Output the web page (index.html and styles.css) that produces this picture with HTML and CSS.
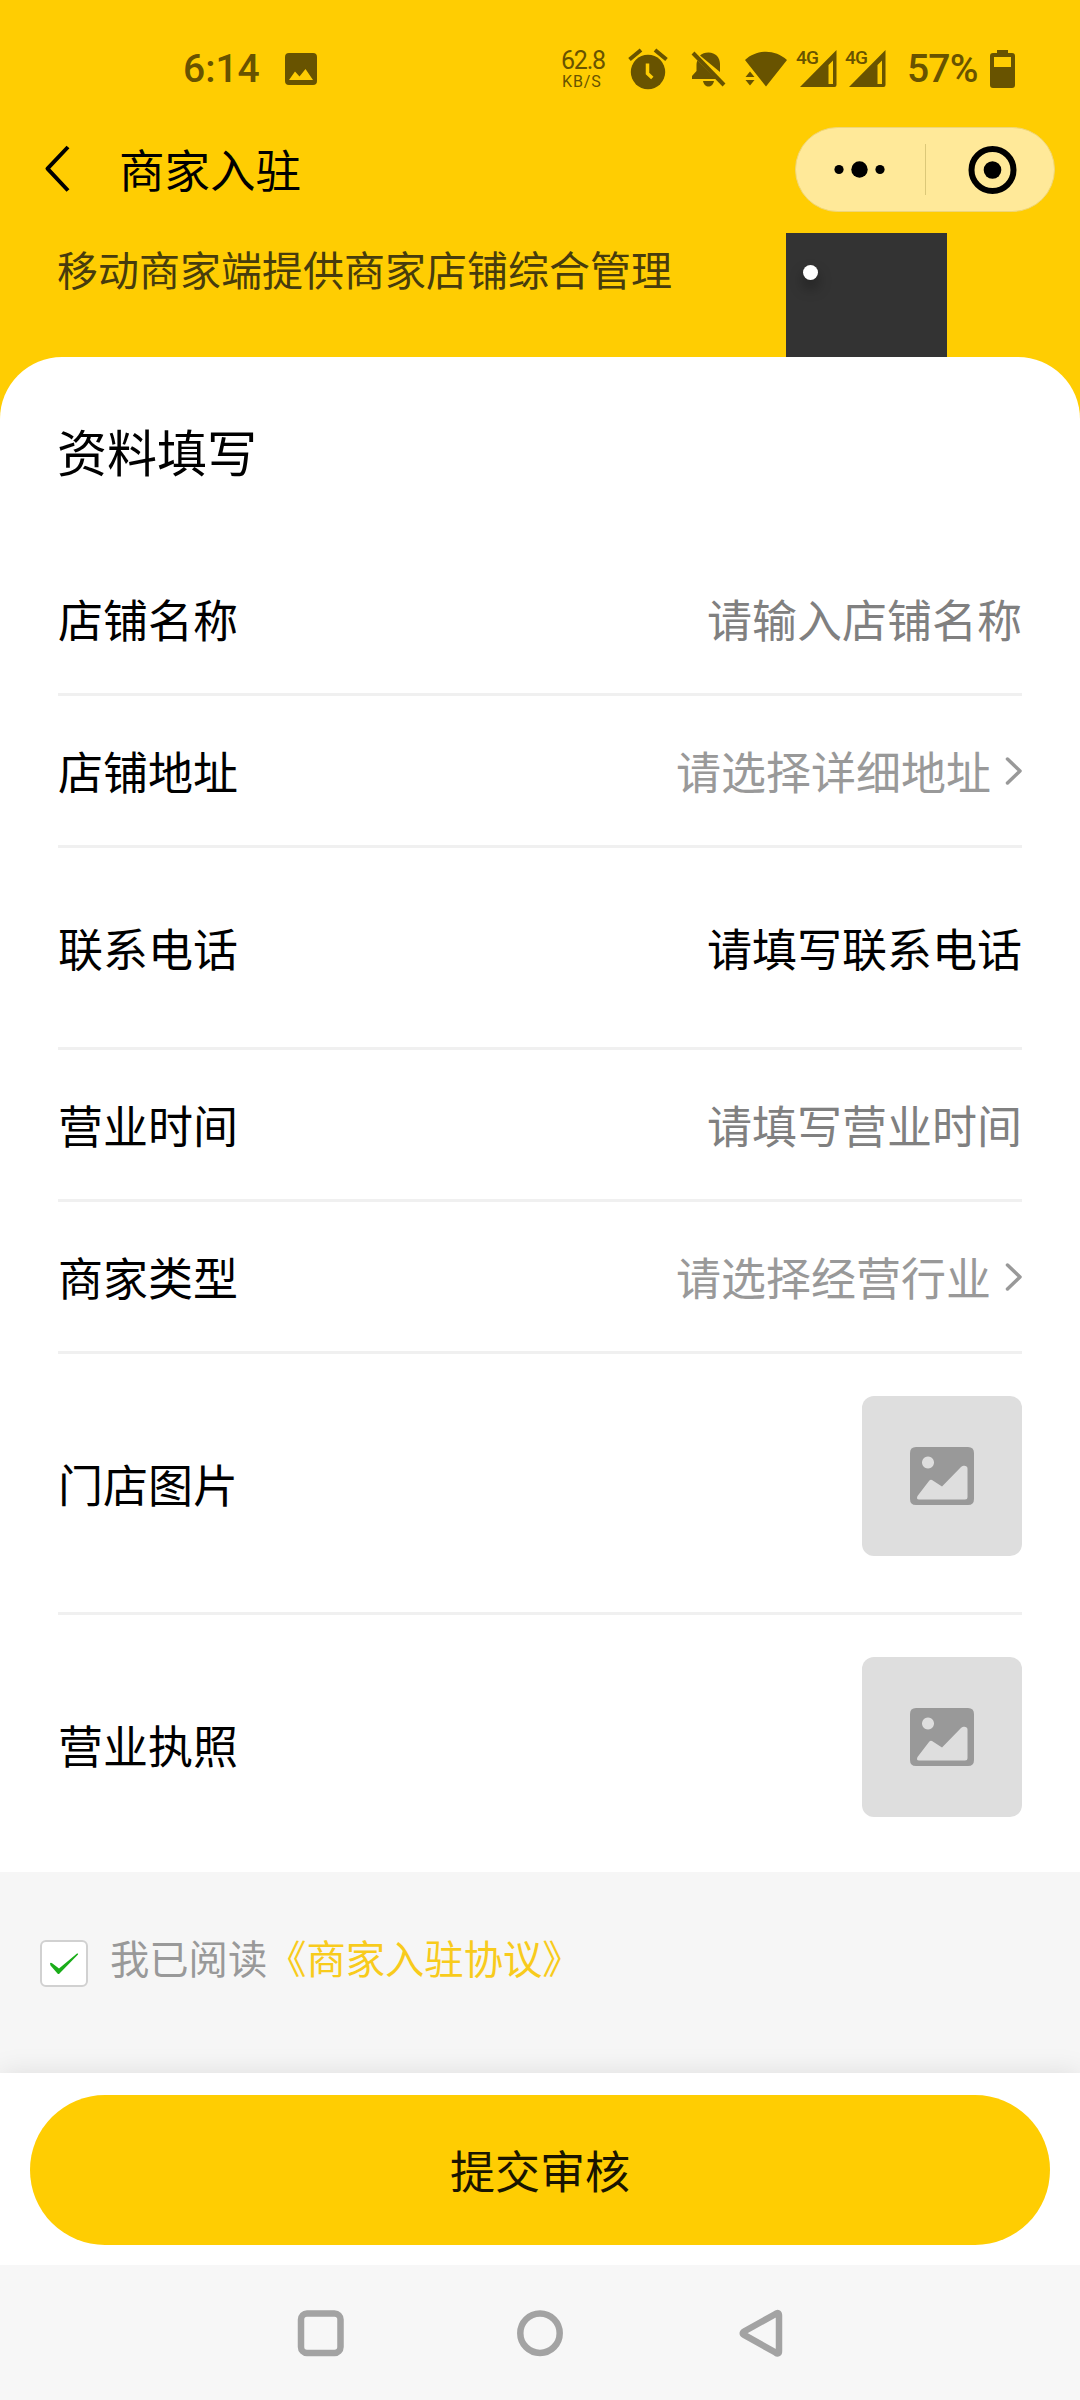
FILE: index.html
```html
<!DOCTYPE html>
<html lang="zh-CN">
<head>
<meta charset="utf-8">
<title>商家入驻</title>
<link rel="stylesheet" href="styles.css">
</head>
<body>
<div class="screen">
  <header class="hero">
    <div class="status">
      <span class="clock">6:14</span>
      <svg class="ic-photo" width="32" height="32" viewBox="0 0 32 32"><path fill-rule="evenodd" d="M4 0h24a4 4 0 0 1 4 4v24a4 4 0 0 1-4 4H4a4 4 0 0 1-4-4V4a4 4 0 0 1 4-4zM4 27h24L20.500 16l-6 7.500-4.500-5z"/></svg>
      <div class="speed"><span class="rate">62.8</span><span class="unit">KB/S</span></div>
      <svg class="ic-alarm" width="40" height="42" viewBox="0 0 40 42"><circle cx="20" cy="24" r="17.200"/><path class="line" d="M1.500 11.500L13 2M38.500 11.500L27 2"/><path class="cut" d="M19.500 15.500v10l4.800 4.500"/></svg>
      <svg class="ic-bell" width="36" height="36" viewBox="0 0 36 36"><path d="M9 4.500C11 2.500 14 1.500 17.500 1.500c7 0 11.500 5 11.500 11.500v8zM6.500 9.500L25 28H1v-3l4.500-5v-6c0-2 .3-3 1-4.500zM12 30h11c-1 4-3 5.500-5.500 5.500S13 34 12 30z"/><path class="line" d="M2 2l31 32"/></svg>
      <svg class="ic-wifi" width="42" height="36" viewBox="0 0 42 36"><path d="M0 9C12-2 30-2 42 9L21 35.500zM5 20.500l4.500 5.500h-9zM.5 29H9.500L5 34.500z"/></svg>
      <div class="cell"><svg width="40" height="38" viewBox="0 0 40 38"><path fill-rule="evenodd" d="M38.500 0v35q0 2-2 2H2zM30.500 15v19H35V10.500z"/></svg><b>4G</b></div>
      <div class="cell"><svg width="40" height="38" viewBox="0 0 40 38"><path fill-rule="evenodd" d="M38.500 0v35q0 2-2 2H2zM30.500 15v19H35V10.500z"/></svg><b>4G</b></div>
      <span class="percent">57%</span>
      <svg class="ic-battery" width="25" height="38" viewBox="0 0 25 38"><path fill-rule="evenodd" d="M7 0h11v3h4q3 0 3 3v29q0 3-3 3H3q-3 0-3-3V6q0-3 3-3h4zM4 7v10h17V7z"/></svg>
    </div>
    <nav class="titlebar">
      <svg class="back" width="28" height="48" viewBox="0 0 28 48"><path d="M25 2L4.500 23.700 25 45.500"/></svg>
      <h1>商家入驻</h1>
      <div class="capsule">
        <svg width="129" height="83" viewBox="0 0 129 83"><circle cx="43" cy="41.500" r="4.600"/><circle cx="63.500" cy="41.500" r="8.200"/><circle cx="84" cy="41.500" r="4.600"/></svg>
        <i></i>
        <svg width="127" height="83" viewBox="0 0 127 83"><circle class="ring" cx="66.500" cy="42" r="21"/><circle cx="66.500" cy="42" r="8.800"/></svg>
      </div>
    </nav>
    <div class="banner">
      <p>移动商家端提供商家店铺综合管理</p>
      <div class="art"><i></i></div>
    </div>
  </header>
  <main class="card">
    <h2>资料填写</h2>
    <div class="row"><label>店铺名称</label><span class="hint">请输入店铺名称</span></div>
    <div class="row"><label>店铺地址</label><span class="pick">请选择详细地址</span><svg class="arrow" width="18" height="30" viewBox="0 0 18 30"><path d="M2.500 3L15 15 2.500 27"/></svg></div>
    <div class="row tall"><label>联系电话</label><span>请填写联系电话</span></div>
    <div class="row"><label>营业时间</label><span class="hint">请填写营业时间</span></div>
    <div class="row"><label>商家类型</label><span class="pick">请选择经营行业</span><svg class="arrow" width="18" height="30" viewBox="0 0 18 30"><path d="M2.500 3L15 15 2.500 27"/></svg></div>
    <div class="row photo"><label>门店图片</label><div class="upload"><svg width="64" height="58" viewBox="0 0 64 58"><path fill-rule="evenodd" d="M6 0h52q6 0 6 6v46q0 6-6 6H6q-6 0-6-6V6q0-6 6-6zM18 9.500a6 6 0 1 0 .01 0zM7.500 49Q6 52.500 9 52.500H55q2.500 0 2.500-2.500V21.500C57.500 18 53 18 51 20L32 39.500 22 33Q20.500 32 19 34z"/></svg></div></div>
    <div class="row photo"><label>营业执照</label><div class="upload"><svg width="64" height="58" viewBox="0 0 64 58"><path fill-rule="evenodd" d="M6 0h52q6 0 6 6v46q0 6-6 6H6q-6 0-6-6V6q0-6 6-6zM18 9.500a6 6 0 1 0 .01 0zM7.500 49Q6 52.500 9 52.500H55q2.500 0 2.500-2.500V21.500C57.500 18 53 18 51 20L32 39.500 22 33Q20.500 32 19 34z"/></svg></div></div>
  </main>
  <section class="agree">
    <div class="check"><svg width="44" height="43" viewBox="0 0 44 43"><path d="M8 21.500q.5-1.500 2.500 0l6.500 5L35 11.500q1.500-.5 1 1L17.500 31.500q-1 1-2 0L8.500 23.500z"/></svg></div>
    <span>我已阅读</span><a>《商家入驻协议》</a>
  </section>
  <div class="submit"><button>提交审核</button></div>
  <footer class="sysnav">
    <svg width="48" height="48" viewBox="0 0 48 48"><rect x="5" y="4.500" width="39.500" height="39.500" rx="6"/></svg>
    <svg width="48" height="48" viewBox="0 0 48 48"><circle cx="24" cy="24.200" r="19.700"/></svg>
    <svg width="48" height="48" viewBox="0 0 48 48"><path d="M39.500 5Q43 2.500 43 6.500V42q0 4-3.500 1.500L8.500 26.200Q5 24.200 8.500 22.200z"/></svg>
  </footer>
</div>
</body>
</html>
```
FILE: styles.css
```css
* { box-sizing: border-box; }
body, h1, h2, p { margin: 0; font-weight: 400; }
body {
  width: 1080px;
  background: #f6f6f6;
  color: #000;
  font: 45px/60px "Noto Sans CJK SC", sans-serif;
}
svg { display: block; flex: none; }
.screen { display: flex; flex-direction: column; height: 2400px; overflow: hidden; }

.hero { height: 427px; flex: none; background: #ffcd02; overflow: hidden; }
.status {
  display: flex;
  align-items: center;
  height: 126px;
  padding: 12px 64px 0 183px;
  color: #685300;
  fill: #685300;
  font-family: Roboto, sans-serif;
}
.clock, .percent { font-size: 39px; font-weight: 500; line-height: 40px; white-space: nowrap; }
.clock { width: 102px; }
.speed { display: flex; flex-direction: column; width: 67px; margin-left: 244px; }
.rate { font-size: 25px; line-height: 24px; letter-spacing: -1.200px; }
.unit { padding-left: 1px; margin-top: 1px; font-size: 16px; line-height: 16px; letter-spacing: .9px; }
.status .line { fill: none; stroke: #685300; stroke-width: 4; }
.cut { fill: none; stroke: #ffcd02; stroke-width: 3.500; }
.ic-bell { margin-left: 23px; }
.ic-wifi { margin-left: 18px; }
.cell { position: relative; width: 40px; margin: 0 0 0 11px; }
.cell + .cell { margin-left: 9px; }
.cell b { position: absolute; left: -2px; top: 0; font-size: 19px; line-height: 15px; font-weight: 500; letter-spacing: -.8px; }
.percent { width: 83px; margin-left: 20px; letter-spacing: -.8px; }

.titlebar { display: flex; align-items: center; height: 86px; padding: 0 25px 0 43px; }
.back path { fill: none; stroke: #000; stroke-width: 4; stroke-linejoin: round; }
.titlebar h1 { flex: 1; margin-left: 48px; padding-bottom: 3px; font-size: 45.500px; line-height: 60px; }
.capsule {
  display: flex;
  align-items: center;
  width: 260px;
  height: 85px;
  border: 1px solid #efd67a;
  border-radius: 43px;
  background: #ffe999;
}
.capsule i { width: 1px; height: 51px; background: #dcc878; }
.ring { fill: none; stroke: #000; stroke-width: 6; }

.banner { display: flex; justify-content: space-between; padding: 21px 132px 0 57px; }
.banner p { margin-top: 5px; font-size: 41px; line-height: 60px; color: #473c0d; }
.art { width: 161px; height: 194px; margin-right: 1px; padding: 32px 17px; background: #333; }
.art i { display: block; width: 15px; height: 15px; border-radius: 50%; background: #fff; box-shadow: 0 8px 14px rgba(0, 0, 0, .4); }

.card { flex: none; position: relative; height: 1515px; margin-top: -70px; padding: 63px 58px 0; border-radius: 62px 62px 0 0; background: #fff; }
.card h2 { height: 124px; margin-left: -1px; font-size: 50px; line-height: 60px; }
.row { display: flex; align-items: center; height: 152px; border-bottom: 3px solid #f0f0f0; white-space: nowrap; }
.row label { flex: 1; }
.row.tall { height: 202px; }
.row.photo { height: 261px; padding-bottom: 14px; }
.photo label { padding-top: 15px; }
.row:last-child { border-bottom: 0; height: 258px; }
.hint { color: #808080; }
.pick { color: #999; }
.arrow { margin-left: 14px; margin-right: -1px; }
.arrow path { fill: none; stroke: #999; stroke-width: 3.500; stroke-linecap: round; stroke-linejoin: round; }
.upload { display: flex; align-items: center; justify-content: center; width: 160px; height: 160px; border-radius: 12px; background: #dedede; fill: #999; }

.agree { display: flex; align-items: center; height: 201px; flex: none; padding: 0 40px; font-size: 39.300px; color: #999; }
.agree a { color: #f8cb1c; }
.agree span, .agree a { padding-bottom: 31px; }
.check { width: 48px; height: 47px; margin: 0 22px 19px 0; border: 2px solid #d1d1d1; border-radius: 6px; background: #fff; fill: #1aad19; }

.submit { flex: none; height: 192px; padding: 22px 30px 20px; background: #fff; box-shadow: 0 0 26px rgba(0, 0, 0, .1); }
.submit button { display: block; width: 100%; height: 150px; border: 0; border-radius: 75px; background: #ffcd02; color: #1a1500; font: inherit; }
.sysnav { position: relative; display: flex; justify-content: space-between; flex: 1; padding: 44px 296px 0; background: #f7f7f7; fill: none; stroke: #a3a3a3; stroke-width: 6.500; }
```
